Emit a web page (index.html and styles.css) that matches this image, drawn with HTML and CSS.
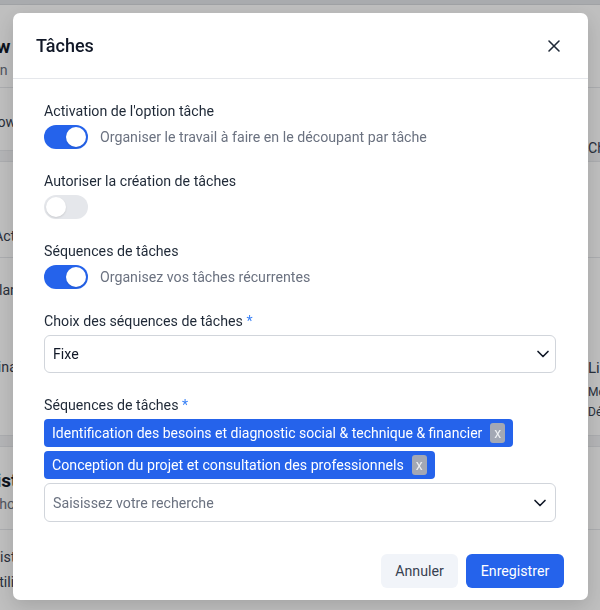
FILE: index.html
```html
<!DOCTYPE html>
<html lang="fr">
<head>
<meta charset="utf-8">
<title>Tâches</title>
<link rel="stylesheet" href="styles.css">
</head>
<body>
<div class="backdrop-page">
  <div class="page">
    <div class="topbar"></div>
    <section class="card card-a">
      <div class="card-head">
        <div class="h">Workflow</div>
        <div class="sub">Approbation</div>
      </div>
      <div class="row row-a">
        <span class="l">Nouveau flow</span>
        <span class="r r-low">Chargé de mission</span>
      </div>
    </section>
    <div class="band"></div>
    <section class="card card-b">
      <div class="row row-b">
        <span class="l">Activer le suivi</span>
        <span class="r"></span>
      </div>
      <div class="row row-c">
        <div class="l stack">
          <span>Planification</span>
          <span class="gap">Financement</span>
        </div>
        <div class="r stack small">
          <span class="big">Liste de</span>
          <span>Mode de</span>
          <span>Détails</span>
        </div>
      </div>
    </section>
    <div class="band band-2"></div>
    <section class="card card-c">
      <div class="card-head head-c">
        <div class="h">Liste</div>
        <div class="sub">Choisissez votre</div>
      </div>
      <div class="row row-d">
        <div class="l stack">
          <span>Historiste</span>
          <span>Utilisateur</span>
        </div>
      </div>
    </section>
  </div>
</div>

<div class="overlay"></div>

<div class="modal" role="dialog" aria-labelledby="modal-title">
  <header class="modal-header">
    <h2 id="modal-title" class="modal-title">Tâches</h2>
    <button class="close" type="button" aria-label="Fermer">
      <svg width="20" height="20" viewBox="0 0 24 24" fill="none" stroke="#1f2937" stroke-width="1.9" stroke-linecap="round"><path d="M6 6l12 12M18 6L6 18"/></svg>
    </button>
  </header>

  <div class="modal-body">
    <div class="field">
      <div class="label">Activation de l'option tâche</div>
      <div class="toggle-row">
        <span class="toggle on"><span class="knob"></span></span>
        <span class="hint">Organiser le travail à faire en le découpant par tâche</span>
      </div>
    </div>

    <div class="field">
      <div class="label">Autoriser la création de tâches</div>
      <div class="toggle-row">
        <span class="toggle"><span class="knob"></span></span>
      </div>
    </div>

    <div class="field">
      <div class="label">Séquences de tâches</div>
      <div class="toggle-row">
        <span class="toggle on"><span class="knob"></span></span>
        <span class="hint">Organisez vos tâches récurrentes</span>
      </div>
    </div>

    <div class="field">
      <div class="label">Choix des séquences de tâches <span class="req">*</span></div>
      <div class="select">
        <span class="value">Fixe</span>
        <svg class="chev" width="20" height="20" viewBox="0 0 24 24" fill="none" stroke="#111827" stroke-width="2" stroke-linecap="round" stroke-linejoin="round"><path d="M6 9l6 6 6-6"/></svg>
      </div>
    </div>

    <div class="field">
      <div class="label label-tags">Séquences de tâches <span class="req">*</span></div>
      <div class="tags">
        <span class="tag">Identification des besoins et diagnostic social &amp; technique &amp; financier <span class="tag-x">x</span></span>
        <span class="tag tag-2">Conception du projet et consultation des professionnels <span class="tag-x">x</span></span>
      </div>
      <div class="select search">
        <span class="placeholder">Saisissez votre recherche</span>
        <svg class="chev" width="20" height="20" viewBox="0 0 24 24" fill="none" stroke="#111827" stroke-width="2" stroke-linecap="round" stroke-linejoin="round"><path d="M6 9l6 6 6-6"/></svg>
      </div>
    </div>
  </div>

  <footer class="modal-footer">
    <button class="btn btn-light" type="button">Annuler</button>
    <button class="btn btn-primary" type="button">Enregistrer</button>
  </footer>
</div>
</body>
</html>
```
FILE: styles.css
```css
* { box-sizing: border-box; }

html, body {
  margin: 0;
  padding: 0;
  height: 100%;
  overflow: hidden;
}

body {
  font-family: "Roboto", "Liberation Sans", sans-serif;
  font-size: 14.2px;
  color: #1f2937;
  background: #ffffff;
}

/* ---------- background page (behind the modal) ---------- */
.backdrop-page {
  width: 100%;
  height: 100%;
  overflow: hidden;
}

.page {
  margin-left: -70px;
  width: 740px;
  color: #374151;
}

.topbar {
  height: 5px;
  background: #e2e4e8;
  border-bottom: 1px solid #d6d8dc;
}

.card { background: #ffffff; }

.card-a { height: 145px; }

.card-head {
  height: 83px;
  padding: 30px 0 0 0;
  border-bottom: 1px solid #e5e7eb;
}

.h {
  font-size: 19px;
  font-weight: 700;
  color: #111827;
  line-height: 24px;
}

.sub {
  color: #6b7280;
  line-height: 22px;
}

.row {
  display: grid;
  grid-template-columns: 658px 1fr;
  border-bottom: 1px solid #e5e7eb;
}

.row .l { padding-left: 60px; white-space: nowrap; }
.row .r { white-space: nowrap; }

.row-a {
  height: 61px;
  padding-top: 26px;
  border-bottom: none;
}

.row-a .l { padding-left: 0; }

.r-low { padding-top: 26px; }

.band {
  height: 12px;
  background: #f1f2f4;
  border-top: 1px solid #e5e7eb;
  border-bottom: 1px solid #e5e7eb;
}

.row-b {
  height: 96px;
  padding-top: 66px;
}

.row-b .l { padding-left: 64px; }

.row-c {
  height: 177px;
  padding-top: 22px;
  border-bottom: none;
}

.row-c .l { padding-left: 60px; }

.stack {
  display: flex;
  flex-direction: column;
  line-height: 20px;
}

.gap { margin-top: 57px; }

.small { font-size: 12px; }

.small .big {
  font-size: 15px;
  margin-top: 78px;
  margin-bottom: 4px;
}

.small span { line-height: 20px; }

.band-2 { height: 12px; }

.head-c {
  height: 83px;
  padding-top: 22px;
  padding-left: 56px;
}

.head-c .sub { padding-left: 4px; }

.row-d {
  height: 90px;
  padding-top: 15px;
  border-bottom: none;
}

.row-d .l { padding-left: 60px; line-height: 25px; }

/* ---------- overlay ---------- */
.overlay {
  position: fixed;
  inset: 0;
  background: rgba(0, 0, 0, 0.25);
}

/* ---------- modal ---------- */
.modal {
  position: fixed;
  top: 13px;
  left: 13px;
  width: 575px;
  height: 587px;
  background: #ffffff;
  border-radius: 7px;
  box-shadow: 0 6px 20px rgba(0, 0, 0, 0.15);
  display: flex;
  flex-direction: column;
}

.modal-header {
  height: 66px;
  display: flex;
  align-items: center;
  justify-content: space-between;
  padding: 0 24px 0 23px;
  border-bottom: 1px solid #e5e7eb;
}

.modal-title {
  margin: 0;
  font-size: 18px;
  font-weight: 500;
  color: #111827;
}

.close {
  border: none;
  background: none;
  padding: 0;
  width: 20px;
  height: 20px;
  display: flex;
  align-items: center;
  justify-content: center;
  cursor: pointer;
}

.modal-body {
  padding: 22px 32px 0 31px;
  display: flex;
  flex-direction: column;
  gap: 22px;
}

.label {
  line-height: 20px;
  margin-bottom: 4px;
  font-weight: 400;
  color: #1f2937;
}

.req { color: #3b82f6; }

.toggle-row {
  display: flex;
  align-items: center;
  gap: 12px;
  height: 24px;
}

.toggle {
  position: relative;
  width: 44px;
  height: 24px;
  border-radius: 12px;
  background: #e5e7eb;
  flex: none;
}

.toggle.on { background: #2563eb; }

.knob {
  position: absolute;
  top: 2px;
  left: 2px;
  width: 20px;
  height: 20px;
  border-radius: 50%;
  background: #ffffff;
  box-shadow: 0 1px 2px rgba(0, 0, 0, 0.12);
}

.toggle.on .knob { left: 22px; }

.hint { color: #6b7280; }

.select {
  height: 38px;
  border: 1px solid #d1d5db;
  border-radius: 6px;
  display: flex;
  align-items: center;
  justify-content: space-between;
  padding: 0 2px 0 8px;
  color: #111827;
}

.search {
  height: 39px;
  padding-right: 5px;
}

.placeholder { color: #6b7280; }

.tags {
  display: flex;
  flex-wrap: wrap;
  gap: 4px;
  margin-bottom: 4px;
}

.tag {
  height: 28px;
  display: inline-flex;
  align-items: center;
  gap: 8px;
  padding: 0 8px;
  background: #2563eb;
  color: #ffffff;
  border-radius: 4px;
  white-space: nowrap;
  font-size: 14px;
}

.tag-2 { font-size: 14.2px; }

.tag-x {
  width: 15px;
  height: 20px;
  border-radius: 3px;
  background: #a3a8b4;
  color: #eef0f3;
  display: inline-flex;
  align-items: center;
  justify-content: center;
  line-height: 1;
  padding-bottom: 1px;
  font-size: 14px;
}

.modal-footer {
  margin-top: auto;
  display: flex;
  justify-content: flex-end;
  gap: 8px;
  padding: 0 24px 12px 0;
}

.btn {
  height: 34px;
  border: none;
  border-radius: 6px;
  font-family: inherit;
  font-size: 14.2px;
  font-weight: 400;
  padding: 0 12px;
  cursor: pointer;
}

.btn-light {
  background: #f1f4f9;
  color: #374151;
  width: 77px;
}

.btn-primary {
  background: #2563eb;
  color: #ffffff;
  width: 98px;
}
```
